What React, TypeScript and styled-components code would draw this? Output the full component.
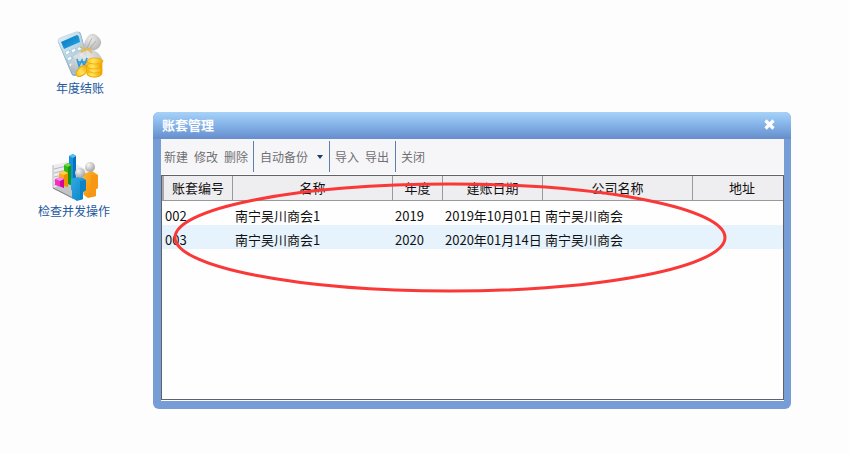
import React from "react";
import styled, { createGlobalStyle } from "styled-components";

const GlobalStyle = createGlobalStyle`
  * { box-sizing: border-box; }
  body {
    margin: 0;
    background: #fdfdfd;
    font-family: "Noto Sans CJK SC", "Liberation Sans", sans-serif;
  }
`;

const Desktop = styled.main`
  position: relative;
  display: flex;
  min-height: 100vh;
  padding: 112px 58px 44px 153px;
`;

const Shortcut = styled.button<{ $x: number; $y: number }>`
  position: absolute;
  left: ${(p) => p.$x}px;
  top: ${(p) => p.$y}px;
  display: flex;
  flex-direction: column;
  align-items: center;
  padding: 0;
  border: 0;
  background: none;
  color: #2358a0;
  font: inherit;
  font-size: 12px;
  line-height: 16px;
  white-space: nowrap;
`;

const Window = styled.section`
  position: relative;
  display: flex;
  flex: 1;
  flex-direction: column;
  min-width: 0;
  padding: 0 7px 8px 8px;
  border-radius: 6px;
  background: #779dd6;
`;

const TitleBar = styled.header`
  display: flex;
  align-items: center;
  justify-content: space-between;
  height: 27px;
  margin: 0 -7px 0 -8px;
  padding: 0 15px 0 9px;
  border-radius: 6px 6px 0 0;
  background: linear-gradient(#a7d2f8, #86b5e9 45%, #668dcd);
`;

const Title = styled.h1`
  margin: 0;
  padding-bottom: 2px;
  color: #fff;
  font-size: 13px;
  line-height: 20px;
`;

const CloseButton = styled.button`
  display: flex;
  padding: 0 0 3px;
  border: 0;
  background: none;
`;

const Toolbar = styled.div`
  display: flex;
  align-items: center;
  height: 35px;
  background: #f6f6f8;
`;

const ToolGroup = styled.div<{ $wide?: boolean }>`
  display: flex;
  align-items: center;
  height: 31px;
  padding: 0 3px 0 ${(p) => (p.$wide ? 3 : 2)}px;

  &:first-child {
    padding: 0 2px 0 0;
  }

  & + & {
    border-left: 1px solid #5b80ad;
  }
`;

const ToolButton = styled.button`
  display: flex;
  align-items: center;
  gap: 9px;
  padding: 0 3px;
  border: 0;
  background: none;
  color: #707074;
  font: inherit;
  font-size: 12px;
  line-height: 18px;
  white-space: nowrap;
`;

const GridFrame = styled.div`
  display: flex;
  flex: 1;
  padding: 1px 0;
  background: #fdfdfe;
`;

const GridPane = styled.div`
  flex: 1;
  overflow: hidden;
  border: 1px solid #5f6268;
  background: #fefefe;
`;

const Table = styled.table`
  width: calc(100% + 9px);
  border-collapse: separate;
  border-spacing: 0;
  table-layout: fixed;
  color: #111;
  font-size: 13px;
  line-height: 18px;
`;

const Column = styled.col<{ $width?: number }>`
  width: ${(p) => (p.$width ? `${p.$width}px` : "auto")};
`;

const HeadCell = styled.th`
  height: 25px;
  padding: 0;
  border-right: 1px solid #9a9a9c;
  border-bottom: 1px solid #98989a;
  background: #eeedef;
  font-weight: 400;
  white-space: nowrap;

  &:first-child {
    border-left: 2px solid #a9a9ad;
  }
`;

const Row = styled.tr<{ $selected?: boolean }>`
  background: ${(p) => (p.$selected ? "#e6f3fc" : "#fefefe")};
`;

const Cell = styled.td`
  height: 24px;
  padding: 6px 0 0 2px;
  white-space: nowrap;

  &:first-child {
    padding-left: 3px;
  }
`;

const Annotation = styled.svg`
  position: absolute;
  left: 19px;
  top: 70px;
  pointer-events: none;
`;

const LedgerIcon = () => (
  <svg width="50" height="50" viewBox="0 0 50 50" aria-hidden="true">
    <defs>
      <linearGradient id="calcBody" x1="0" y1="0" x2="1" y2="1">
        <stop offset="0" stopColor="#e4f1f8" />
        <stop offset="1" stopColor="#8db9d2" />
      </linearGradient>
      <linearGradient id="screen" x1="0" y1="0" x2="1" y2="1">
        <stop offset="0" stopColor="#0a76bd" />
        <stop offset="1" stopColor="#22a9e6" />
      </linearGradient>
      <radialGradient id="bag" cx="0.4" cy="0.3" r="0.8">
        <stop offset="0" stopColor="#ececea" />
        <stop offset="1" stopColor="#abaeb0" />
      </radialGradient>
      <linearGradient id="coin" x1="0" y1="0" x2="1" y2="0">
        <stop offset="0" stopColor="#ffc71a" />
        <stop offset="0.4" stopColor="#ffe25c" />
        <stop offset="1" stopColor="#f3a800" />
      </linearGradient>
    </defs>
    <path d="M3 12 22 2q3-1 4 2l9 34-15 8q-3 0-4-3Z" fill="#7ba3ba" />
    <path d="M3 11q0-2 2-3L21 2q3-1 4 2l9 33-14 7q-2 1-3-2Z" fill="url(#calcBody)" stroke="#b4d0df" strokeWidth=".7" />
    <path d="m6 12 16-7q2 0 3 7L9 19Z" fill="url(#screen)" />
    <g fill="#fbfeff" stroke="#87aec3" strokeWidth=".5">
      <path d="m10 22 4-2 1 3-4 2ZM16 20l4-2 1 3-4 2ZM22 18l4-2 1 3-4 2ZM12 28l4-2 1 3-4 2ZM18 26l4-2 1 3-4 2ZM24 24l4-2 1 3-4 2ZM14 34l4-2 1 3-4 2Z" />
    </g>
    <path d="M29 19q-1-7 4-13 4-4 8-1 6 4 5 9-2 6-10 7Z" fill="url(#bag)" />
    <path d="M30 20q-9 2-13 10-2 6-1 12 5 2 12 0l18-4q3-9-2-14-5-5-14-4Z" fill="url(#bag)" opacity=".86" />
    <path d="m37 8-5 10M41 11l-6 7" stroke="#a2a4a5" strokeWidth=".8" fill="none" />
    <path d="m25 17 6 3 6-2M32 19l-6 3M33 19l4 4" fill="none" stroke="#e9b748" strokeWidth="1.6" />
    <path d="m22 29 2 7 3-6 2 6 3-8M22 32h10" fill="none" stroke="#2b9bdc" strokeWidth="1.6" />
    <ellipse cx="27" cy="41" rx="7" ry="4" fill="url(#coin)" stroke="#eda300" transform="rotate(-42 27 41)" />
    <g fill="url(#coin)" stroke="#eaa200" strokeWidth=".7">
      <path d="M32 31v13c2 4 13 4 15 0V31Z" />
      <ellipse cx="39" cy="44" rx="7" ry="3" />
      <ellipse cx="40" cy="40" rx="7" ry="3" />
      <ellipse cx="39" cy="36" rx="7" ry="3" />
      <ellipse cx="40" cy="31" rx="8" ry="3" />
    </g>
  </svg>
);

const OperationsIcon = () => (
  <svg width="50" height="50" viewBox="0 0 50 50" aria-hidden="true">
    <defs>
      <linearGradient id="bluePerson" x1="0" y1="0" x2="1" y2="1">
        <stop offset="0" stopColor="#31abe5" />
        <stop offset="1" stopColor="#0a82c6" />
      </linearGradient>
      <linearGradient id="orangePerson" x1="0" y1="0" x2="1" y2="1">
        <stop offset="0" stopColor="#ffb52d" />
        <stop offset="1" stopColor="#f18500" />
      </linearGradient>
      <radialGradient id="head" cx="0.35" cy="0.3" r="0.8">
        <stop offset="0" stopColor="#f7f7f7" />
        <stop offset="1" stopColor="#9b9b9b" />
      </radialGradient>
    </defs>
    <path d="m4 12 17-4 19 10v20L23 45 4 35Z" fill="#ededf0" />
    <path d="M4 12v23l20 10M5 16l17-4M5 20l17-4M5 24l17-4M5 28l17-4M5 32l17-4" fill="none" stroke="#b6b6bc" />
    <path d="m4 35 18-7 21 10-19 8Z" fill="#c3c4c8" />
    <path d="m4 35 20 10" stroke="#7f8085" />
    <path d="m20 3 4-2 3 2v28l-7-2Z" fill="#1494df" />
    <path d="m24 4 3-1v28l-3-1Z" fill="#0b70be" />
    <path d="m20 3 4-2 3 2-3 2Z" fill="#5bbced" />
    <path d="m15 12 4-2 3 2v20l-7-2Z" fill="#30b91a" />
    <path d="m19 13 3-1v20l-3-1Z" fill="#139811" />
    <path d="m15 12 4-2 3 2-3 2Z" fill="#7bd840" />
    <path d="m10 20 5-2 4 2v14l-9-3Z" fill="#ffad1c" />
    <path d="m15 21 4-1v14l-4-1Z" fill="#ec9100" />
    <path d="m10 20 5-2 4 2-4 2Z" fill="#ffd24c" />
    <path d="m6 26 5-2 4 2v9l-9-3Z" fill="#f131c1" />
    <path d="m11 27 4-1v9l-4-2Z" fill="#d4059d" />
    <path d="m6 26 5-2 4 2-4 2Z" fill="#ff8bdd" />
    <path d="m34 21 9-3 6 4v13l-2 1v7l-8 2-4-3Z" fill="url(#orangePerson)" />
    <path d="m42 22 7 0v13l-2 1v7l-5 1Z" fill="#f79812" />
    <circle cx="41" cy="14" r="5" fill="url(#head)" />
    <path d="m22 26 9-3 6 4v10l-3 2v7l-6 2-5-3v-7l-1-2Z" fill="url(#bluePerson)" />
    <path d="m31 28 6-1v10l-3 2v7l-3 1Z" fill="#0d83c7" />
    <circle cx="31" cy="20" r="5" fill="url(#head)" />
  </svg>
);

const columns = [
  { name: "账套编号", width: 71 },
  { name: "名称", width: 160 },
  { name: "年度", width: 50 },
  { name: "建账日期", width: 100 },
  { name: "公司名称", width: 150 },
  { name: "地址" },
];

const records = [
  ["002", "南宁吴川商会1", "2019", "2019年10月01日", "南宁吴川商会", ""],
  ["003", "南宁吴川商会1", "2020", "2020年01月14日", "南宁吴川商会", ""],
];

export default function App() {
  return (
    <>
      <GlobalStyle />
      <Desktop>
        <Shortcut $x={55} $y={30}>
          <LedgerIcon />
          年度结账
        </Shortcut>
        <Shortcut $x={38} $y={153}>
          <OperationsIcon />
          检查并发操作
        </Shortcut>

        <Window aria-label="账套管理">
          <TitleBar>
            <Title>账套管理</Title>
            <CloseButton aria-label="关闭窗口">
              <svg width="13" height="12" viewBox="0 0 13 12" aria-hidden="true">
                <path d="m2.5 2.5 8 8m0-8-8 8" stroke="#fff" strokeWidth="3.2" />
              </svg>
            </CloseButton>
          </TitleBar>
          <Toolbar role="toolbar">
            <ToolGroup>
              <ToolButton>新建</ToolButton>
              <ToolButton>修改</ToolButton>
              <ToolButton>删除</ToolButton>
            </ToolGroup>
            <ToolGroup $wide>
              <ToolButton>
                自动备份
                <svg width="6" height="4" viewBox="0 0 6 4" aria-hidden="true">
                  <path d="M0 0h6L3 4Z" fill="#173d73" />
                </svg>
              </ToolButton>
            </ToolGroup>
            <ToolGroup>
              <ToolButton>导入</ToolButton>
              <ToolButton>导出</ToolButton>
            </ToolGroup>
            <ToolGroup>
              <ToolButton>关闭</ToolButton>
            </ToolGroup>
          </Toolbar>
          <GridFrame>
            <GridPane>
              <Table>
                <colgroup>
                  {columns.map((c) => (
                    <Column key={c.name} $width={c.width} />
                  ))}
                </colgroup>
                <thead>
                  <tr>
                    {columns.map((c) => (
                      <HeadCell key={c.name} scope="col">
                        {c.name}
                      </HeadCell>
                    ))}
                  </tr>
                </thead>
                <tbody>
                  {records.map((record, i) => (
                    <Row key={record[0]} $selected={i === 1}>
                      {record.map((value, j) => (
                        <Cell key={j}>{value}</Cell>
                      ))}
                    </Row>
                  ))}
                </tbody>
              </Table>
            </GridPane>
          </GridFrame>
          <Annotation width="556" height="112" viewBox="0 0 556 112" aria-hidden="true">
            <ellipse cx="278" cy="55.5" rx="275" ry="53.5" fill="none" stroke="#fa3838" strokeWidth="3" />
          </Annotation>
        </Window>
      </Desktop>
    </>
  );
}
